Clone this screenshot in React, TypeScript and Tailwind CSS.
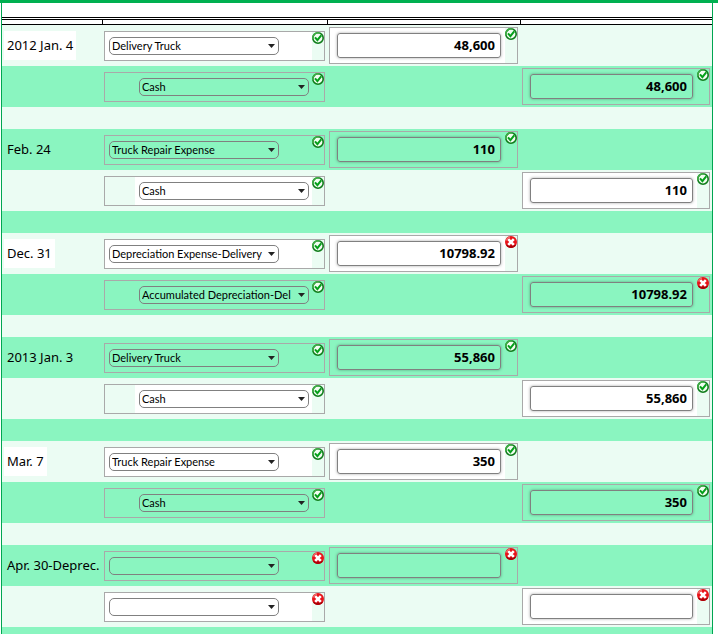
import clsx from 'clsx';

interface Line {
  date?: string;
  account: string;
  amount: string;
  side: 'debit' | 'credit';
  indent?: boolean;
  accountOk: boolean;
  amountOk: boolean;
}

const entries: Line[][] = [
  [
    { date: '2012 Jan. 4', account: 'Delivery Truck', amount: '48,600', side: 'debit', accountOk: true, amountOk: true },
    { account: 'Cash', amount: '48,600', side: 'credit', indent: true, accountOk: true, amountOk: true },
  ],
  [
    { date: 'Feb. 24', account: 'Truck Repair Expense', amount: '110', side: 'debit', accountOk: true, amountOk: true },
    { account: 'Cash', amount: '110', side: 'credit', indent: true, accountOk: true, amountOk: true },
  ],
  [
    { date: 'Dec. 31', account: 'Depreciation Expense-Delivery', amount: '10798.92', side: 'debit', accountOk: true, amountOk: false },
    { account: 'Accumulated Depreciation-Del', amount: '10798.92', side: 'credit', indent: true, accountOk: true, amountOk: false },
  ],
  [
    { date: '2013 Jan. 3', account: 'Delivery Truck', amount: '55,860', side: 'debit', accountOk: true, amountOk: true },
    { account: 'Cash', amount: '55,860', side: 'credit', indent: true, accountOk: true, amountOk: true },
  ],
  [
    { date: 'Mar. 7', account: 'Truck Repair Expense', amount: '350', side: 'debit', accountOk: true, amountOk: true },
    { account: 'Cash', amount: '350', side: 'credit', indent: true, accountOk: true, amountOk: true },
  ],
  [
    { date: 'Apr. 30-Deprec.', account: '', amount: '', side: 'debit', accountOk: false, amountOk: false },
    { account: '', amount: '', side: 'credit', accountOk: false, amountOk: false },
  ],
];

// null marks the empty row after each entry
const rows: (Line | null)[] = entries.flatMap((entry) => [...entry, null]);

function Mark({ ok }: { ok: boolean }) {
  if (ok) {
    return (
      <svg viewBox="0 0 12 12" className="size-3 shrink-0" role="img" aria-label="Correct">
        <circle cx="6" cy="6" r="5.2" fill="#f2fdf2" stroke="#0f7d1a" strokeWidth="1.6" />
        <path d="M.9 7A5.2 5.2 0 0 1 7 .9" fill="none" stroke="#3fae45" strokeWidth="1.5" />
        <path d="M3 5.4 5.4 8.2 9.2 3.4" fill="none" stroke="#05a01a" strokeWidth="2" />
      </svg>
    );
  }
  return (
    <svg viewBox="0 0 12 12" className="size-3 shrink-0" role="img" aria-label="Incorrect">
      <circle cx="6" cy="6" r="6" fill="#e8141a" />
      <path d="M.6 8.6A6 6 0 0 0 11.4 8.6Q6 10.5 .6 8.6" fill="#ab0008" />
      <path d="M1.2 4.6A5 5 0 0 1 5 1" fill="none" stroke="#f58080" strokeWidth="1" />
      <path d="M3.2 3.2 8.8 8.8M8.8 3.2 3.2 8.8" stroke="#fff" strokeWidth="2.6" />
    </svg>
  );
}

function AccountField({ line, white, label }: { line: Line; white: boolean; label: string }) {
  return (
    <div className="flex h-[30px] border border-[#a9a9a9]">
      {line.indent && <div className="w-[30px] shrink-0" />}
      <div className={clsx('flex-1 pt-[5px] pl-1', white && 'bg-white')}>
        <div className="relative w-[170px]">
          <select
            aria-label={label}
            defaultValue={line.account}
            className="block h-[18px] w-full appearance-none overflow-hidden rounded-[5px] border border-[#808080] bg-transparent pl-0.5 font-['Lato','Noto_Sans',sans-serif] text-[11px] leading-4 text-black"
          >
            <option value={line.account}>{line.account}</option>
          </select>
          <svg viewBox="0 0 7 4" className="pointer-events-none absolute top-[7px] right-1 h-1 w-[7px]">
            <path d="M0 0H7L3.5 4Z" fill="#222" />
          </svg>
        </div>
      </div>
      <Mark ok={line.accountOk} />
    </div>
  );
}

function AmountField({ line, white, label }: { line: Line; white: boolean; label: string }) {
  return (
    <div className="flex h-[37px] border border-[#a9a9a9]">
      <div className={clsx('flex-1 pt-[5px] pr-1 pl-[7px]', white && 'bg-white')}>
        <input
          type="text"
          aria-label={label}
          defaultValue={line.amount}
          className="block h-[25px] w-full rounded-[3px] border border-[#808080] bg-transparent px-[5px] pb-0.5 text-right text-[13px] leading-5 font-bold text-black shadow-[0_0_3px_rgba(0,0,0,0.35)]"
        />
      </div>
      <Mark ok={line.amountOk} />
    </div>
  );
}

export default function App() {
  return (
    <main className="h-screen overflow-hidden bg-white pr-[5px] pl-px font-['Noto_Sans',sans-serif] text-black">
      <div className="-mr-[5px] -ml-px h-[3px] bg-[#00b050]" />
      <table className="w-full table-fixed border-separate border-spacing-0 border-x border-[#00a651]">
        <colgroup>
          <col className="w-[100px]" />
          <col className="w-[225px]" />
          <col className="w-[193px]" />
          <col />
        </colgroup>
        <thead>
          <tr>
            <td colSpan={4} className="h-[17px] border-b-3 border-double border-black p-0" />
          </tr>
          <tr>
            <th aria-label="Date" className="h-[5px] border-b border-black p-0" />
            <th aria-label="Account" className="h-[5px] border-b border-l border-black p-0" />
            <th aria-label="Debit" className="h-[5px] border-b border-l border-black p-0" />
            <th aria-label="Credit" className="h-[5px] border-b border-l border-black p-0" />
          </tr>
        </thead>
        <tbody>
          {rows.map((line, i) => {
            const white = i % 2 === 0;
            const bg = white ? 'bg-[#ebfcf3]' : 'bg-[#8af5c0]';
            if (!line) {
              return (
                <tr key={i} className={bg}>
                  <td colSpan={4} className="h-[22px] p-0" />
                </tr>
              );
            }
            return (
              <tr key={i} className={clsx('h-[41px] align-top', bg)}>
                <td className="px-0.5 pt-1.5 pb-0">
                  {line.date && (
                    <span className={clsx('inline-block px-[3px] text-[13px] leading-[29px] whitespace-nowrap', white && 'bg-white')}>
                      {line.date}
                    </span>
                  )}
                </td>
                <td className="px-0.5 pt-1.5 pb-0">
                  <AccountField line={line} white={white} label={`Account, row ${i + 1}`} />
                </td>
                <td className="px-0.5 pt-0.5 pb-0">
                  {line.side === 'debit' && <AmountField line={line} white={white} label={`Debit, row ${i + 1}`} />}
                </td>
                <td className="px-0.5 pt-0.5 pb-0">
                  {line.side === 'credit' && <AmountField line={line} white={white} label={`Credit, row ${i + 1}`} />}
                </td>
              </tr>
            );
          })}
        </tbody>
      </table>
    </main>
  );
}
